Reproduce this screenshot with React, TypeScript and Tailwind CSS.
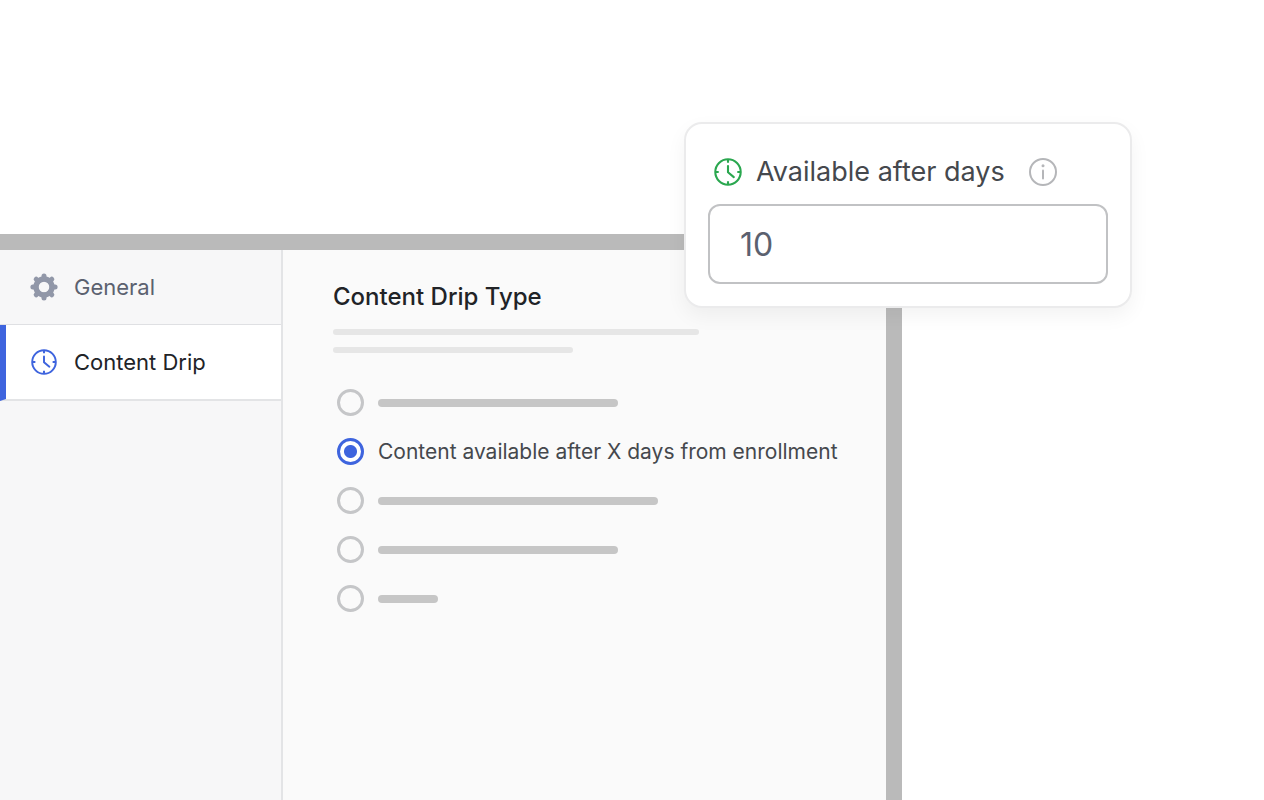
import { useState } from "react";

const options = [
  { id: "opt-1", bar: "w-60" },
  { id: "opt-2", label: "Content available after X days from enrollment" },
  { id: "opt-3", bar: "w-[280px]" },
  { id: "opt-4", bar: "w-60" },
  { id: "opt-5", bar: "w-[60px]" },
];

function ClockIcon({ className }: { className: string }) {
  return (
    <svg viewBox="0 0 28 28" fill="none" stroke="currentColor" strokeWidth="2.1" className={className}>
      <circle cx="14" cy="14" r="12.7" />
      <path d="M14 1.5v3.2M14 23.3v3.2M1.5 14h3.2M23.3 14h3.2" />
      <path d="M14 8v6.2l5.8 4.9" strokeLinecap="round" strokeLinejoin="round" />
    </svg>
  );
}

function GearIcon({ className }: { className: string }) {
  return (
    <svg viewBox="0 0 28 28" fill="none" stroke="currentColor" className={className}>
      <circle cx="14" cy="14" r="8" strokeWidth="5.4" />
      <path
        d="M14 2.9v3M14 22.1v3M2.9 14h3M22.1 14h3M6.2 6.2l2 2M19.8 19.8l2 2M6.2 21.8l2-2M19.8 8.2l2-2"
        strokeWidth="5"
        strokeLinecap="round"
      />
    </svg>
  );
}

function InfoIcon({ className }: { className: string }) {
  return (
    <svg viewBox="0 0 28 28" fill="none" stroke="currentColor" className={className}>
      <circle cx="14" cy="14" r="13" strokeWidth="2" />
      <circle cx="14" cy="7.8" r="1.5" fill="currentColor" stroke="none" />
      <path d="M14 12.6v8" strokeWidth="2" strokeLinecap="round" />
    </svg>
  );
}

export default function App() {
  const [selected, setSelected] = useState("opt-2");
  const [days, setDays] = useState("10");

  return (
    <div className="flex min-h-screen flex-col overflow-hidden bg-white pt-[234px] font-['Inter','Liberation_Sans',sans-serif]">
      <div className="relative flex w-full max-w-[902px] flex-1 border-t-16 border-r-16 border-[#bababa] bg-[#fafafa]">
        <nav className="flex w-[283px] shrink-0 flex-col border-r-2 border-[#e3e4e6] bg-[#f7f7f8]">
          <button className="flex h-[75px] items-center gap-4 border-b border-[#dfe0e3] pl-[30px] text-[22px] text-[#5b616f]">
            <GearIcon className="size-7 text-[#9197a8]" />
            General
          </button>
          <button className="flex h-[76px] items-center gap-4 border-b-2 border-l-6 border-b-[#e3e4e6] border-l-[#3e64de] bg-white pl-6 text-[22px] text-[#212327]">
            <ClockIcon className="size-7 p-px text-[#3e64de]" />
            Content Drip
          </button>
        </nav>

        <main className="flex-1 pt-8 pl-[50px]">
          <h1 className="text-2xl leading-[30px] font-medium text-[#212327]">Content Drip Type</h1>
          <div className="mt-[17px] h-1.5 w-[366px] rounded-full bg-[#e6e6e6]" />
          <div className="mt-3 h-1.5 w-60 rounded-full bg-[#e6e6e6]" />

          <div role="radiogroup" aria-label="Content Drip Type" className="mt-9 flex flex-col gap-[22px] pl-1">
            {options.map((option, i) => (
              <label key={option.id} htmlFor={option.id} className="flex h-[27px] items-center gap-3.5">
                <input
                  id={option.id}
                  type="radio"
                  name="drip-type"
                  aria-label={option.label ?? `Option ${i + 1}`}
                  checked={selected === option.id}
                  onChange={() => setSelected(option.id)}
                  className="size-[27px] shrink-0 appearance-none rounded-full border-3 border-[#c5c6c8] bg-[#fafafa] checked:border-[#3e64de] checked:bg-[radial-gradient(circle,#3e64de_6px,#ffffff_7px)]"
                />
                {option.label ? (
                  <span className="text-[21px] whitespace-nowrap text-[#45484d]">{option.label}</span>
                ) : (
                  <span className={`h-2 rounded-full bg-[#c6c6c6] ${option.bar}`} />
                )}
              </label>
            ))}
          </div>
        </main>

        {/* floating card over the panel corner */}
        <section className="absolute -top-32 -right-[246px] w-[448px] rounded-[18px] border-2 border-[#ebebec] bg-white px-[22px] pt-7 pb-[22px] shadow-[0_8px_20px_rgba(0,0,0,0.05)]">
          <div className="flex h-10 items-center pl-1.5">
            <ClockIcon className="size-7 text-[#2aa74f]" />
            <label htmlFor="days" className="ml-3.5 text-[27px] text-[#45484d]">
              Available after days
            </label>
            <InfoIcon className="ml-6 size-7 text-[#b5b6b9]" />
          </div>
          <input
            id="days"
            type="text"
            value={days}
            onChange={(e) => setDays(e.target.value)}
            className="mt-3 h-20 w-full rounded-xl border-2 border-[#c1c2c4] bg-white px-[30px] text-[32px] text-[#5b616f] outline-none"
          />
        </section>
      </div>
    </div>
  );
}
